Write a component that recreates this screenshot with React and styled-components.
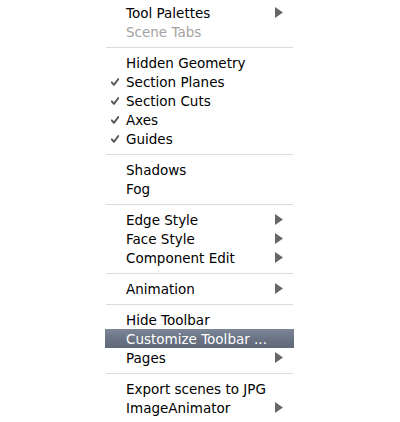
import React from "react";
import styled, { createGlobalStyle } from "styled-components";

const Global = createGlobalStyle`
  html, body { margin: 0; padding: 0; background: #ffffff; }
  body { font-family: "DejaVu Sans", "Liberation Sans", sans-serif; }
`;

const Page = styled.div`
  width: 400px;
  height: 422px;
  background: #ffffff;
  overflow: hidden;
`;

const Menu = styled.div`
  margin-left: 105px;
  width: 189px;
  padding: 3px 0 4px;
  display: flex;
  flex-direction: column;
  background: #ffffff;
`;

const Row = styled.div`
  height: 19px;
  display: flex;
  align-items: center;
  font-size: 13.5px;
  color: ${(p) => (p.$highlight ? "#ffffff" : p.$disabled ? "#a3a3a3" : "#000000")};
  background: ${(p) =>
    p.$highlight ? "linear-gradient(to bottom, #7d8798 0%, #6a7484 50%, #5e6878 100%)" : "transparent"};
  white-space: nowrap;
`;

const CheckCol = styled.div`
  width: 21px;
  flex: none;
  display: flex;
  align-items: center;
  padding-left: 6px;
  box-sizing: border-box;
`;

const Label = styled.span`
  flex: 1;
`;

const ArrowBox = styled.div`
  flex: none;
  width: 8px;
  margin-right: 11px;
  display: flex;
  align-items: center;
`;

const Separator = styled.div`
  height: 12px;
  display: flex;
  align-items: center;
  padding: 0 1px;
  &::after {
    content: "";
    flex: 1;
    height: 1px;
    background: #dcdcdc;
  }
`;

const Check = () => (
  <svg width="8" height="8" viewBox="0 0 8 8">
    <path d="M0.8 4.4 L2.9 6.8 L7.4 1" fill="none" stroke="#5a5a5a" strokeWidth="2" strokeLinejoin="round" strokeLinecap="round" />
  </svg>
);

const Arrow = () => (
  <svg width="8" height="11" viewBox="0 0 8 11">
    <path d="M0 0 L8 5.5 L0 11 Z" fill="#676767" />
  </svg>
);

const groups = [
  [
    { label: "Tool Palettes", sub: true },
    { label: "Scene Tabs", disabled: true },
  ],
  [
    { label: "Hidden Geometry" },
    { label: "Section Planes", checked: true },
    { label: "Section Cuts", checked: true },
    { label: "Axes", checked: true },
    { label: "Guides", checked: true },
  ],
  [{ label: "Shadows" }, { label: "Fog" }],
  [
    { label: "Edge Style", sub: true },
    { label: "Face Style", sub: true },
    { label: "Component Edit", sub: true },
  ],
  [{ label: "Animation", sub: true }],
  [
    { label: "Hide Toolbar" },
    { label: "Customize Toolbar ...", highlight: true },
    { label: "Pages", sub: true },
  ],
  [
    { label: "Export scenes to JPG" },
    { label: "ImageAnimator", sub: true },
  ],
];

export default function App() {
  return (
    <Page>
      <Global />
      <Menu>
        {groups.map((g, gi) => (
          <React.Fragment key={gi}>
            {gi > 0 && <Separator />}
            {g.map((it) => (
              <Row key={it.label} $disabled={it.disabled} $highlight={it.highlight}>
                <CheckCol>{it.checked && <Check />}</CheckCol>
                <Label>{it.label}</Label>
                {it.sub && (
                  <ArrowBox>
                    <Arrow />
                  </ArrowBox>
                )}
              </Row>
            ))}
          </React.Fragment>
        ))}
      </Menu>
    </Page>
  );
}
